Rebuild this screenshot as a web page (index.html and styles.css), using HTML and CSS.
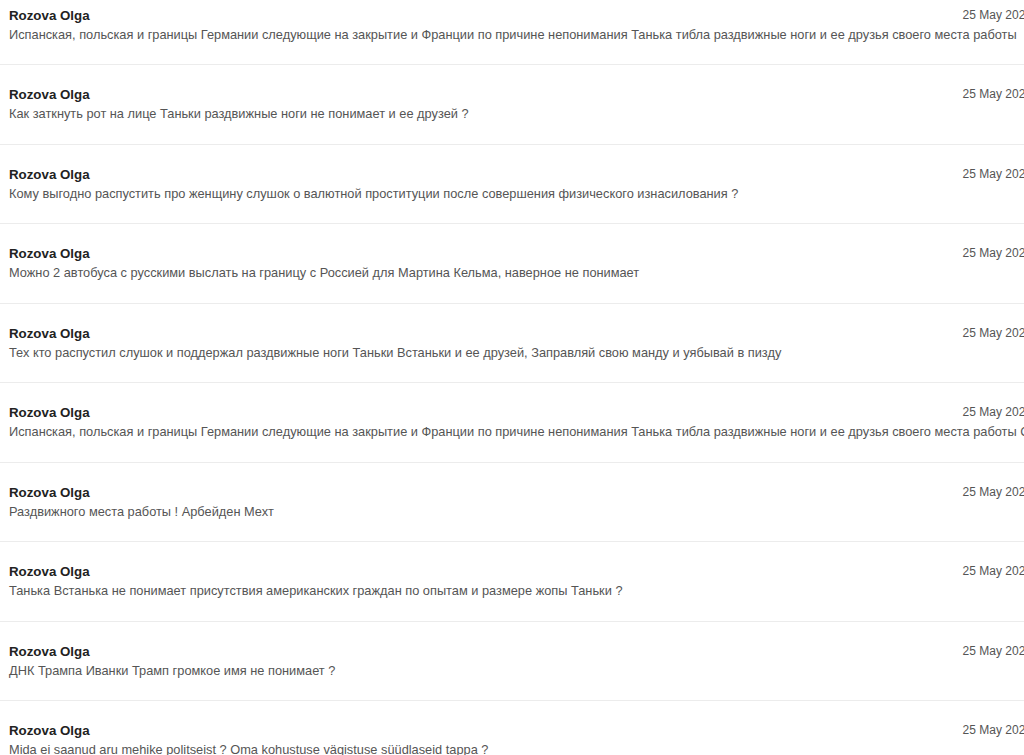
FILE: index.html
```html
<!DOCTYPE html>
<html lang="ru">
<head>
    <meta charset="UTF-8">
    <meta name="viewport" content="width=device-width, initial-scale=1.0">
    <title>Messages</title>
    <link rel="stylesheet" href="styles.css">
</head>
<body>
    <div class="feed">
        <div class="msg">
            <div class="msg-head">
                <span class="author">Rozova Olga</span>
                <span class="date">25 May 2025</span>
            </div>
            <div class="msg-text">Испанская, польская и границы Германии следующие на закрытие и Франции по причине непонимания Танька тибла раздвижные ноги и ее друзья своего места работы</div>
        </div>
        <div class="msg">
            <div class="msg-head">
                <span class="author">Rozova Olga</span>
                <span class="date">25 May 2025</span>
            </div>
            <div class="msg-text">Как заткнуть рот на лице Таньки раздвижные ноги не понимает и ее друзей ?</div>
        </div>
        <div class="msg">
            <div class="msg-head">
                <span class="author">Rozova Olga</span>
                <span class="date">25 May 2025</span>
            </div>
            <div class="msg-text">Кому выгодно распустить про женщину слушок о валютной проституции после совершения физического изнасилования ?</div>
        </div>
        <div class="msg">
            <div class="msg-head">
                <span class="author">Rozova Olga</span>
                <span class="date">25 May 2025</span>
            </div>
            <div class="msg-text">Можно 2 автобуса с русскими выслать на границу с Россией для Мартина Кельма, наверное не понимает</div>
        </div>
        <div class="msg">
            <div class="msg-head">
                <span class="author">Rozova Olga</span>
                <span class="date">25 May 2025</span>
            </div>
            <div class="msg-text">Тех кто распустил слушок и поддержал раздвижные ноги Таньки Встаньки и ее друзей, Заправляй свою манду и уябывай в пизду</div>
        </div>
        <div class="msg">
            <div class="msg-head">
                <span class="author">Rozova Olga</span>
                <span class="date">25 May 2025</span>
            </div>
            <div class="msg-text">Испанская, польская и границы Германии следующие на закрытие и Франции по причине непонимания Танька тибла раздвижные ноги и ее друзья своего места работы С уважением</div>
        </div>
        <div class="msg">
            <div class="msg-head">
                <span class="author">Rozova Olga</span>
                <span class="date">25 May 2025</span>
            </div>
            <div class="msg-text">Раздвижного места работы ! Арбейден Мехт</div>
        </div>
        <div class="msg">
            <div class="msg-head">
                <span class="author">Rozova Olga</span>
                <span class="date">25 May 2025</span>
            </div>
            <div class="msg-text">Танька Встанька не понимает присутствия американских граждан по опытам и размере жопы Таньки ?</div>
        </div>
        <div class="msg">
            <div class="msg-head">
                <span class="author">Rozova Olga</span>
                <span class="date">25 May 2025</span>
            </div>
            <div class="msg-text">ДНК Трампа Иванки Трамп громкое имя не понимает ?</div>
        </div>
        <div class="msg">
            <div class="msg-head">
                <span class="author">Rozova Olga</span>
                <span class="date">25 May 2025</span>
            </div>
            <div class="msg-text">Mida ei saanud aru mehike politseist ? Oma kohustuse vägistuse süüdlaseid tappa ?</div>
        </div>
    </div>
</body>
</html>
```

FILE: styles.css
```css
* {
    margin: 0;
    padding: 0;
    box-sizing: border-box;
}

html, body {
    overflow: hidden;
}

body {
    font-family: 'Liberation Sans', Arial, sans-serif;
    background: #fff;
    color: #222;
    height: 755px;
}

.feed {
    width: 1040px;
}

.msg {
    padding: 20px 8px 20px 9px;
    border-bottom: 1px solid #ececec;
    height: 79.5px;
}

.msg:first-child {
    padding-top: 5.5px;
    height: 65px;
}

.msg-head {
    display: flex;
    justify-content: space-between;
    align-items: baseline;
    line-height: 20px;
}

.author {
    font-size: 13.3px;
    font-weight: bold;
    color: #222;
}

.date {
    font-size: 12px;
    color: #555;
    position: relative;
    top: -1px;
}

.msg-text {
    font-size: 12.8px;
    line-height: 18px;
    color: #555;
    white-space: nowrap;
}
```
